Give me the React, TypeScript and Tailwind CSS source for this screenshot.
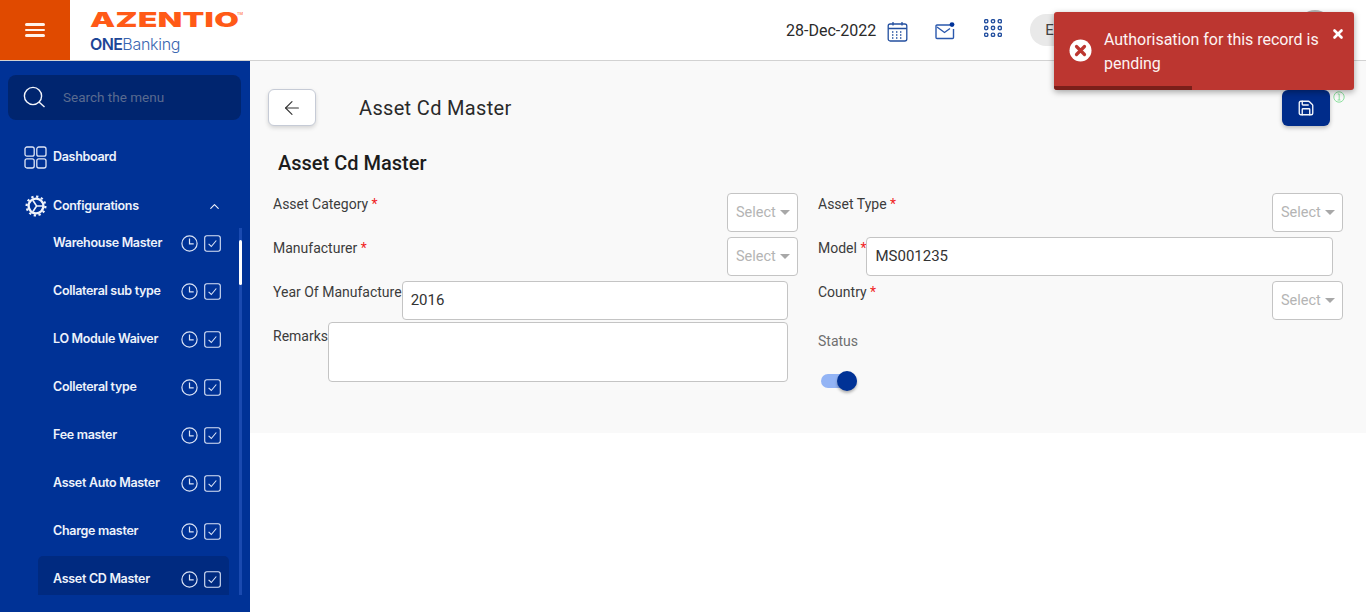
import React from "react";
import { ArrowLeft, ChevronUp, Save, X } from "lucide-react";

const menu = ["Warehouse Master", "Collateral sub type", "LO Module Waiver", "Colleteral type", "Fee master", "Asset Auto Master", "Charge master", "Asset CD Master"];

function Clock() {
  return (
    <svg width="17" height="17" viewBox="0 0 17 17" fill="none" stroke="#dbe4f6" strokeWidth="1.2">
      <circle cx="8.5" cy="8.5" r="7.6" />
      <path d="M8.5 3.6v5.2h4.2" />
    </svg>
  );
}
function Check() {
  return (
    <svg width="17" height="17" viewBox="0 0 17 17" fill="none" stroke="#dbe4f6" strokeWidth="1.1">
      <rect x="0.7" y="0.7" width="15.6" height="15.6" rx="2.2" />
      <path d="M4.6 8.8l2.7 2.7 5-6" />
    </svg>
  );
}
function Gear() {
  return (
    <svg width="22" height="22" viewBox="0 0 22 22" fill="none" stroke="#f1f4fb">
      <circle cx="11" cy="11" r="7.4" strokeWidth="2.4" />
      <circle cx="11" cy="11" r="9.4" strokeWidth="2.2" strokeDasharray="2.3 2.6" />
      <path d="M8 5.5l3.6 5.5L8 16.5M11.6 11h6.6" strokeWidth="1.6" />
    </svg>
  );
}
function Field({ label, required, children }: { label: string; required?: boolean; children: React.ReactNode }) {
  return (
    <div className="flex items-start">
      <span className="text-[14px] leading-[20px] pt-[1px] whitespace-nowrap text-[#3c3c3c]">
        {label}
        {required && <span className="text-[#f01f1f]"> *</span>}
      </span>
      {children}
    </div>
  );
}
function SelectBox() {
  return (
    <div className="ml-auto w-[71px] h-[39px] bg-white border border-[#c4c4c4] rounded-[4px] flex items-center pl-[8px] gap-[4px]">
      <span className="text-[14.5px] text-[#b4b4b4]">Select</span>
      <span className="w-0 h-0 border-x-[5px] border-x-transparent border-t-[5px] border-t-[#a8a8a8]" />
    </div>
  );
}
function TextBox({ value }: { value: string }) {
  return (
    <div className="flex-1 mr-[10px] h-[39px] bg-white border border-[#c4c4c4] rounded-[4px] flex items-center pl-[8px] text-[15px] text-[#333]">
      {value}
    </div>
  );
}

export default function App() {
  return (
    <div className="relative h-screen w-full overflow-hidden bg-white flex flex-col font-['Roboto',sans-serif]">
      <header className="h-[61px] shrink-0 flex items-stretch border-b border-[#d2d2d2] bg-white">
        <div className="w-[70px] h-[60px] bg-[#e04a00] flex flex-col items-center justify-center gap-[3px]">
          <span className="w-[20px] h-[2.5px] bg-[#fff3ea] rounded" />
          <span className="w-[20px] h-[2.5px] bg-[#fff3ea] rounded" />
          <span className="w-[20px] h-[2.5px] bg-[#fff3ea] rounded" />
        </div>
        <div className="w-[180px] pl-[20px] pt-[8px] flex flex-col">
          <div className="relative flex items-start h-[24px]">
            <span className="origin-left scale-x-[1.55] inline-block font-['Inter',sans-serif] font-black text-[20.5px] leading-[24px] tracking-[0.2px] text-[#ff5a17]">AZENTIO</span>
            <span className="absolute left-[147px] top-[3px] text-[4px] leading-[5px] text-[#ff5a17]">TM</span>
          </div>
          <div className="text-[16px] leading-[20px] mt-[2px] font-['Inter',sans-serif] text-[#3a66b0] tracking-[-0.3px]">
            <span className="font-semibold text-[#1d4596] tracking-[-0.6px]">ONE</span>
            <span className="font-light">Banking</span>
          </div>
        </div>
        <div className="flex-1 flex items-start pl-[536px] pt-[14px]">
          <span className="text-[16px] leading-[34px] text-[#2a2a2a] whitespace-nowrap">28-Dec-2022</span>
          <svg className="ml-[11px] mt-[7px]" width="21" height="21" viewBox="0 0 21 21" fill="none" stroke="#234f9f" strokeWidth="1.3">
            <rect x="1.2" y="3" width="18.6" height="17" rx="2" />
            <path d="M1.2 7.5h18.6M6 1v3.5M15 1v3.5" />
            <path d="M5 11h2M9 11h2M13 11h2M5 14h2M9 14h2M13 14h2M5 17h2M9 17h2M13 17h2" strokeWidth="1.4" strokeDasharray="1.4 0.6" />
          </svg>
          <svg className="ml-[27px] mt-[8px]" width="20" height="18" viewBox="0 0 20 18" fill="none" stroke="#2a58ad" strokeWidth="1.4">
            <path d="M15 3H2a1 1 0 0 0-1 1v11.5a1 1 0 0 0 1 1h15.5a1 1 0 0 0 1-1V7" />
            <path d="M2 5l7.5 5.5L15 6.5" />
            <circle cx="17" cy="2.6" r="2.4" fill="#003399" stroke="none" />
          </svg>
          <svg className="ml-[29px] mt-[5px]" width="18" height="18" viewBox="0 0 18 18" fill="none" stroke="#234f9f" strokeWidth="1.4">
            {[2.2, 9, 15.8].map((y) => [2.2, 9, 15.8].map((x) => <circle key={`${x}-${y}`} cx={x} cy={y} r="1.7" />))}
          </svg>
          <div className="ml-[28px] h-[32px] w-[120px] rounded-full bg-[#e9e9e9] text-[15px] leading-[32px] pl-[15px] text-[#444]">E</div>
          <div className="ml-[148px] -mt-[4px] w-[34px] h-[34px] rounded-full bg-[#b5b5b5]" />
        </div>
      </header>

      <div className="flex-1 flex min-h-0">
        <aside className="w-[250px] shrink-0 bg-[#003296] pt-[14px] font-['Inter',sans-serif] text-[#eef2fb] flex flex-col">
          <div className="ml-[8px] w-[233px] h-[45px] rounded-[8px] bg-[#00256f] flex items-center pl-[15px]">
            <svg width="23" height="23" viewBox="0 0 23 23" fill="none" stroke="#f3f6fc" strokeWidth="1.4">
              <circle cx="10" cy="10" r="8.6" />
              <path d="M16 16l5.5 5" />
            </svg>
            <span className="ml-[17px] text-[13.5px] font-['Roboto',sans-serif] text-[#5a6b8f]">Search the menu</span>
          </div>
          <div className="flex items-center h-[22px] mt-[26px] pl-[24px]">
            <svg width="23" height="23" viewBox="0 0 23 23" fill="none" stroke="#dfe6f6" strokeWidth="1.3">
              <rect x="1" y="1" width="9.2" height="9.2" rx="2" />
              <rect x="12.8" y="1" width="9.2" height="9.2" rx="2" />
              <rect x="1" y="12.8" width="9.2" height="9.2" rx="2" />
              <rect x="12.8" y="12.8" width="9.2" height="9.2" rx="2" />
            </svg>
            <span className="ml-[6px] text-[12.5px] font-semibold tracking-[-0.3px]">Dashboard</span>
          </div>
          <div className="flex items-center h-[22px] mt-[27px] pl-[25px]">
            <Gear />
            <span className="ml-[6px] text-[12.5px] font-semibold tracking-[-0.3px]">Configurations</span>
            <ChevronUp className="ml-[68px]" size={15} strokeWidth={1.8} color="#f1f4fb" />
          </div>
          <div className="relative mt-[3px] h-[375px] overflow-hidden pl-[38px]">
            {menu.map((m, i) => (
              <div key={m} className={`w-[191px] h-[46px] mb-[2px] pl-[15px] pr-[8px] flex items-center rounded-t-[5px] ${i === 7 ? "bg-[#002a80]" : ""}`}>
                <span className="text-[12.5px] font-semibold tracking-[-0.3px] whitespace-nowrap">{m}</span>
                <span className="ml-auto flex gap-[6px]">
                  <Clock />
                  <Check />
                </span>
              </div>
            ))}
            <div className="absolute right-[8px] top-[8px] w-[3px] bottom-0 bg-[#1a4ab0]">
              <div className="absolute top-[12px] left-0 w-[3px] h-[45px] bg-white rounded" />
            </div>
          </div>
        </aside>

        <main className="flex-1 min-w-0">
          <section className="h-[372px] bg-[#f9f9f9] pt-[28px] pl-[18px] pr-[23px]">
            <div className="flex items-start h-[38px]">
              <button className="w-[48px] h-[37px] bg-white border border-[#c6cbd6] rounded-[6px] shadow-[0_2px_4px_rgba(0,0,0,0.15)] flex items-center justify-center">
                <ArrowLeft size={22} strokeWidth={1.2} color="#333" />
              </button>
              <h1 className="ml-[43px] text-[20px] leading-[38px] tracking-[0.33px] text-[#2a2a2a]">Asset Cd Master</h1>
              <button className="ml-auto mr-[13px] mt-[1px] w-[48px] h-[36px] bg-[#002c8a] rounded-[6px] shadow-[0_2px_4px_rgba(0,0,0,0.25)] flex items-center justify-center">
                <Save size={18} strokeWidth={1.8} color="#f3f6fc" />
              </button>
            </div>
            <h2 className="mt-[23px] ml-[10px] text-[20px] leading-[26px] font-medium tracking-[0px] text-[#1c1c1c]">Asset Cd Master</h2>
            <div className="mt-[17px] ml-[5px] grid grid-cols-[525px_525px] gap-x-[20px]">
              <div className="flex flex-col gap-[5px]">
                <Field label="Asset Category" required><SelectBox /></Field>
                <Field label="Manufacturer" required><SelectBox /></Field>
                <Field label="Year Of Manufacture"><TextBox value="2016" /></Field>
                <div className="flex items-start -mt-[3px]">
                  <span className="text-[14px] leading-[20px] pt-[4px] text-[#3c3c3c]">Remarks</span>
                  <div className="flex-1 mr-[10px] h-[60px] bg-white border border-[#c4c4c4] rounded-[4px]" />
                </div>
              </div>
              <div className="flex flex-col gap-[5px]">
                <Field label="Asset Type" required><SelectBox /></Field>
                <Field label="Model" required><TextBox value="MS001235" /></Field>
                <Field label="Country" required><SelectBox /></Field>
                <div className="pt-[6px]">
                  <div className="text-[14px] leading-[20px] text-[#6f6f6f]">Status</div>
                  <div className="relative mt-[23px] ml-[3px] w-[36px] h-[14px] bg-[#93b4f5] rounded-full">
                    <span className="absolute right-0 -top-[3px] w-[20px] h-[20px] rounded-full bg-[#003296] shadow-[0_2px_3px_rgba(0,0,0,0.3)]" />
                  </div>
                </div>
              </div>
            </div>
          </section>
        </main>
      </div>

      <svg className="absolute left-[1333px] top-[91px]" width="12" height="12" viewBox="0 0 12 12" fill="none" stroke="#7fdc93" strokeWidth="0.9">
        <circle cx="6" cy="6" r="5.2" />
        <path d="M4.8 3h1.4v6M4.6 9h2.8" />
      </svg>

      <div className="absolute left-[1054px] top-[12px] w-[300px] h-[78px] bg-[#bc3630] rounded-[3px] shadow-[0_2px_6px_rgba(0,0,0,0.35)] overflow-hidden text-white">
        <div className="flex pl-[15px] pt-[16px] pr-[28px]">
          <svg className="mt-[11px] shrink-0" width="23" height="23" viewBox="0 0 23 23">
            <circle cx="11.5" cy="11.5" r="11" fill="#fff" />
            <path d="M7.5 7.5l8 8M15.5 7.5l-8 8" stroke="#bc3630" strokeWidth="3.2" strokeLinecap="round" />
          </svg>
          <p className="ml-[12px] text-[16px] leading-[24px] tracking-[-0.03px] text-[#fdf3f2]">Authorisation for this record is pending</p>
        </div>
        <X className="absolute right-[9px] top-[15px]" size={14} strokeWidth={4.5} color="#fff" />
        <div className="absolute left-0 bottom-0 h-[4px] w-[138px] bg-[#7a1f1a]" />
      </div>
    </div>
  );
}
